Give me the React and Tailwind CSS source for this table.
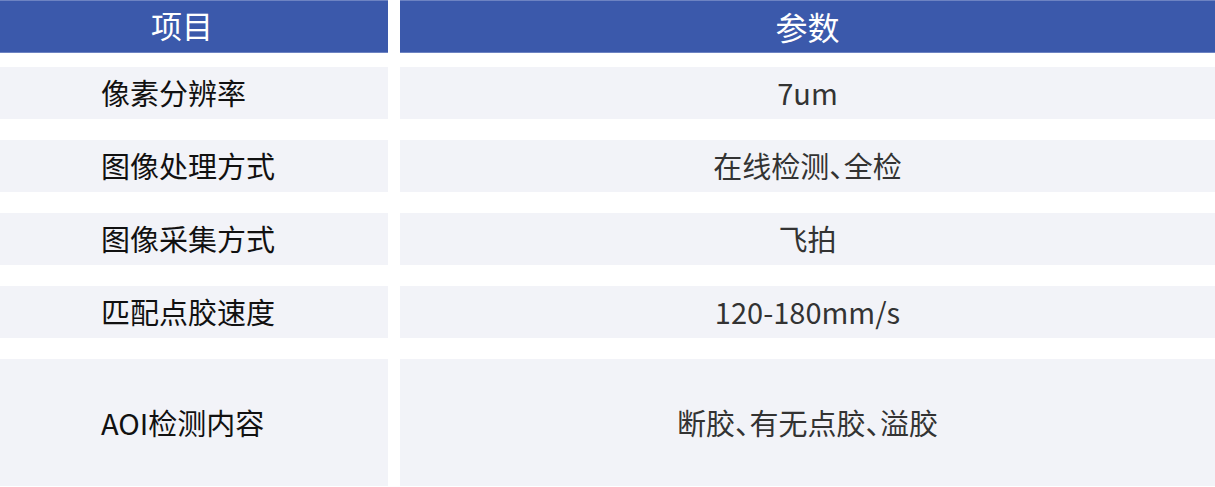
export default function App() {
  const rows = [
    ["像素分辨率", "7um", "h-[52px]"],
    ["图像处理方式", "在线检测、全检", "h-[52px]"],
    ["图像采集方式", "飞拍", "h-[52px]"],
    ["匹配点胶速度", "120-180mm/s", "h-[52px]"],
    ["AOI检测内容", "断胶、有无点胶、溢胶", "h-[127px]"],
  ];
  return (
    <div
      className="w-[1215px] h-[487px] bg-white overflow-hidden [font-feature-settings:'halt']"
      style={{ fontFamily: '"Noto Sans CJK SC", "Noto Sans", sans-serif' }}
    >
      <div className="grid grid-cols-[388px_815px] gap-x-[12px]">
        <div className="h-[53px] bg-[#3b59ab] border-t border-b border-[#6d83c2] text-white text-[31px] flex items-center pl-[151px] pb-[2px]">
          项目
        </div>
        <div className="h-[53px] bg-[#3b59ab] border-t border-b border-[#6d83c2] text-white text-[32px] flex items-center justify-center pb-[2px]">
          参数
        </div>
      </div>
      <div className="mt-[14px] flex flex-col gap-[21px]">
        {rows.map(([a, b, h], i) => (
          <div key={i} className="grid grid-cols-[388px_815px] gap-x-[12px]">
            <div className={`${h} bg-[#f2f3f8] flex items-center pl-[101px] text-[#111111] text-[29px]`}>
              {a}
            </div>
            <div className={`${h} bg-[#f2f3f8] flex items-center justify-center text-[#333333] text-[29px]`}>
              {b}
            </div>
          </div>
        ))}
      </div>
    </div>
  );
}
